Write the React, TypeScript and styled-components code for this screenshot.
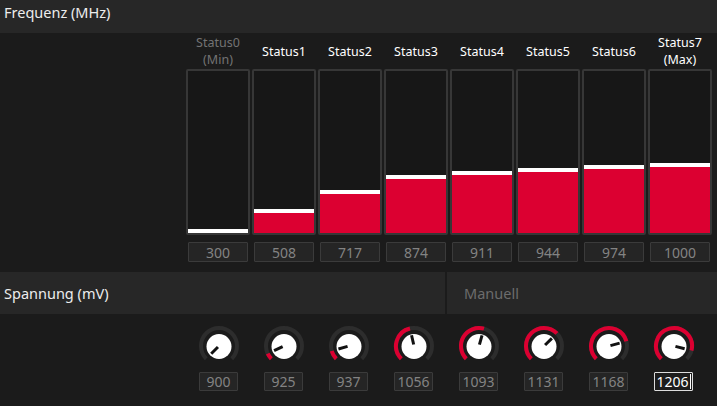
import styled, { createGlobalStyle } from "styled-components";

const GlobalStyle = createGlobalStyle`
  html, body {
    margin: 0;
    padding: 0;
    background: #1b1b1b;
  }
  * {
    box-sizing: border-box;
  }
`;

const RED = "#dc0031";

const states = [
  { name: "Status0", sub: "(Min)", mhz: 300, mv: 900, muted: true },
  { name: "Status1", mhz: 508, mv: 925 },
  { name: "Status2", mhz: 717, mv: 937 },
  { name: "Status3", mhz: 874, mv: 1056 },
  { name: "Status4", mhz: 911, mv: 1093 },
  { name: "Status5", mhz: 944, mv: 1131 },
  { name: "Status6", mhz: 974, mv: 1168 },
  { name: "Status7", sub: "(Max)", mhz: 1000, mv: 1206 },
];

const Page = styled.div`
  width: 717px;
  height: 406px;
  background: #1b1b1b;
  font-family: "Noto Sans", "Open Sans", sans-serif;
  color: #ececec;
  overflow: hidden;
`;

const SectionHeader = styled.div`
  height: 33px;
  background: #272727;
  padding: 2px 4px;
  font-size: 14.5px;
  line-height: 20px;
  color: #ededed;
`;

const FreqGrid = styled.div`
  display: flex;
  justify-content: flex-end;
  gap: 2px;
  padding-right: 5px;
`;

const Column = styled.div`
  width: 64px;
  display: flex;
  flex-direction: column;
`;

const StatusLabel = styled.div<{ $muted?: boolean }>`
  height: 36px;
  display: flex;
  flex-direction: column;
  align-items: center;
  justify-content: center;
  font-size: 12.5px;
  font-weight: 400;
  line-height: 17px;
  color: ${({ $muted }) => ($muted ? "#737373" : "#ffffff")};
`;

const BarBox = styled.div`
  height: 166px;
  border: 2px solid #373737;
  border-radius: 2px;
  background: #171717;
  display: flex;
  flex-direction: column;
  justify-content: flex-end;
`;

const BarFill = styled.div`
  background: ${RED};
  border-top: 4px solid #ffffff;
`;

const ValueBox = styled.div<{ $active?: boolean }>`
  display: flex;
  align-items: center;
  justify-content: center;
  background: ${({ $active }) => ($active ? "#1d1d1d" : "#252525")};
  border: 1px solid ${({ $active }) => ($active ? "#dcdcdc" : "#3b3b3b")};
  border-radius: 1px;
  color: ${({ $active }) => ($active ? "#ffffff" : "#838383")};
  font-size: 14px;
`;

const FreqValue = styled(ValueBox)`
  height: 20px;
  margin: 7px 2px 0;
`;

const Band = styled.div`
  margin-top: 10px;
  display: grid;
  grid-template-columns: 445px 1fr;
  gap: 2px;
  height: 42px;
`;

const BandCell = styled.div<{ $muted?: boolean }>`
  background: #272727;
  display: flex;
  align-items: center;
  padding-left: ${({ $muted }) => ($muted ? "17px" : "4px")};
  font-size: 14.5px;
  color: ${({ $muted }) => ($muted ? "#6c6c6c" : "#ededed")};
`;

const KnobRow = styled.div`
  margin-top: 10px;
  padding-left: 186px;
  display: grid;
  grid-template-columns: repeat(8, 65px);
`;

const KnobCell = styled.div`
  display: flex;
  flex-direction: column;
  align-items: center;
`;

const KnobValue = styled(ValueBox)`
  width: 39px;
  height: 19px;
  margin-top: 4px;
`;

const Caret = styled.span`
  display: inline-block;
  width: 1px;
  height: 15px;
  background: #ffffff;
  margin-left: 1px;
`;

const MV_MIN = 900;
const MV_MAX = 1245;

const polar = (a: number, r: number) => {
  const rad = (a * Math.PI) / 180;
  return [22 + r * Math.sin(rad), 22 - r * Math.cos(rad)];
};

const arc = (from: number, to: number, r: number) => {
  const [x1, y1] = polar(from, r);
  const [x2, y2] = polar(to, r);
  const large = to - from > 180 ? 1 : 0;
  return `M ${x1} ${y1} A ${r} ${r} 0 ${large} 1 ${x2} ${y2}`;
};

const Knob = ({ value }: { value: number }) => {
  const angle = -135 + ((value - MV_MIN) / (MV_MAX - MV_MIN)) * 270;
  const [px1, py1] = polar(angle, 1.5);
  const [px2, py2] = polar(angle, 11);
  return (
    <svg width="44" height="44" viewBox="0 0 44 44">
      <path d={arc(-135, 135, 18)} stroke="#2d2d2d" strokeWidth="4" fill="none" />
      {angle > -134 && (
        <path d={arc(-135, angle, 18)} stroke={RED} strokeWidth="4" fill="none" />
      )}
      <circle cx="22" cy="22.5" r="12.5" fill="#ffffff" />
      <line x1={px1} y1={py1} x2={px2} y2={py2} stroke="#111111" strokeWidth="3" />
    </svg>
  );
};

const App = () => {
  return (
    <Page>
      <GlobalStyle />
      <SectionHeader>Frequenz (MHz)</SectionHeader>
      <FreqGrid>
        {states.map((s) => (
          <Column key={s.name}>
            <StatusLabel $muted={s.muted}>
              <span>{s.name}</span>
              {s.sub && <span>{s.sub}</span>}
            </StatusLabel>
            <BarBox>
              <BarFill style={{ height: 4 + ((s.mhz - 300) * 66) / 700 }} />
            </BarBox>
            <FreqValue>{s.mhz}</FreqValue>
          </Column>
        ))}
      </FreqGrid>
      <Band>
        <BandCell>Spannung (mV)</BandCell>
        <BandCell $muted>Manuell</BandCell>
      </Band>
      <KnobRow>
        {states.map((s, i) => {
          const active = i === states.length - 1;
          return (
            <KnobCell key={s.name}>
              <Knob value={s.mv} />
              <KnobValue $active={active}>
                {s.mv}
                {active && <Caret />}
              </KnobValue>
            </KnobCell>
          );
        })}
      </KnobRow>
    </Page>
  );
};

export default App;
